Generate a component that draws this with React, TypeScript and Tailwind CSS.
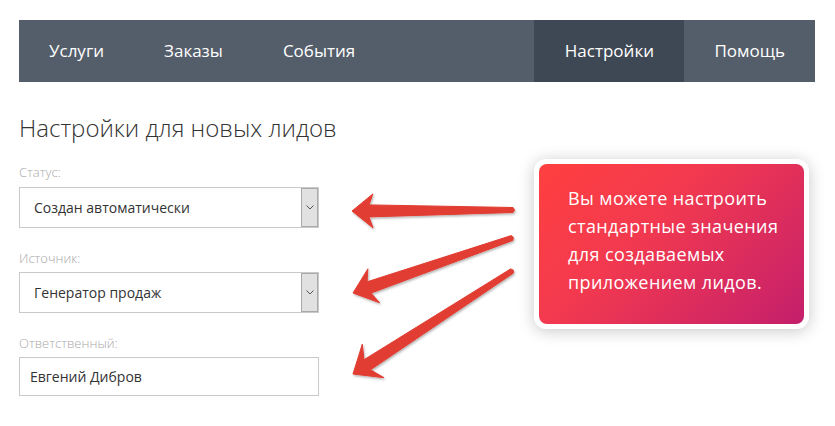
import React from "react";

type Pt = [number, number];

function arrowPoints(tip: Pt, tail: Pt, L = 23, W = 18, notch = 17, wh = 12, wt = 5): string {
  const dx = tail[0] - tip[0];
  const dy = tail[1] - tip[1];
  const len = Math.hypot(dx, dy);
  const ux = dx / len;
  const uy = dy / len;
  const nx = -uy;
  const ny = ux;
  const p = (a: number, b: number): string =>
    `${(tip[0] + ux * a + nx * b).toFixed(1)},${(tip[1] + uy * a + ny * b).toFixed(1)}`;
  return [
    p(0, 0),
    p(L, W),
    p(notch, wh / 2),
    p(len, wt / 2),
    p(len + 1.5, 0),
    p(len, -wt / 2),
    p(notch, -wh / 2),
    p(L, -W),
  ].join(" ");
}

function Select({ value }: { value: string }) {
  return (
    <div className="flex h-[41px] w-[300px] border border-[#c9c9c9] bg-white">
      <div className="flex flex-1 items-center pl-[14px] text-[14px] text-[#333]">{value}</div>
      <div className="flex w-[17px] items-center justify-center border border-[#a9a9a9] bg-[#e1e1e1]">
        <svg width="8" height="5" viewBox="0 0 8 5">
          <path d="M0.5 0.5 L4 4 L7.5 0.5" fill="none" stroke="#555" strokeWidth="1" />
        </svg>
      </div>
    </div>
  );
}

export default function App() {
  const navItem = "flex items-center px-[30px] text-[17px] text-white";
  return (
    <div className="relative h-[426px] w-[835px] overflow-hidden bg-white font-['Open_Sans',sans-serif]">
      <div className="px-[19px] pt-[20px] pr-[20px]">
        <div className="flex h-[62px] bg-[#545d6a]">
          <div className={navItem}>Услуги</div>
          <div className={navItem}>Заказы</div>
          <div className={navItem}>События</div>
          <div className={`${navItem} ml-auto w-[150px] justify-center bg-[#3e4754]`}>Настройки</div>
          <div className={navItem}>Помощь</div>
        </div>
      </div>

      <div className="flex px-[19px]">
        <div className="w-[300px]">
          <h1 className="mt-[31px] whitespace-nowrap text-[24px] font-light leading-[30px] text-[#333]">
            Настройки для новых лидов
          </h1>
          <div className="mt-[20px] text-[13px] font-light leading-[18px] text-[#a9a9a9]">Статус:</div>
          <div className="mt-[6px]">
            <Select value="Создан автоматически" />
          </div>
          <div className="mt-[21px] text-[13px] font-light leading-[18px] text-[#a9a9a9]">Источник:</div>
          <div className="mt-[5px]">
            <Select value="Генератор продаж" />
          </div>
          <div className="mt-[21px] text-[13px] font-light leading-[18px] text-[#a9a9a9]">Ответственный:</div>
          <div className="mt-[5px] flex h-[39px] w-[300px] items-center border border-[#c9c9c9] pl-[10px] text-[14px] text-[#333]">
            Евгений Дибров
          </div>
        </div>

        <div className="ml-auto mr-[7px] mt-[77px] h-[170px] w-[275px] rounded-[12px] bg-white p-[5px] shadow-[0_2px_16px_rgba(0,0,0,0.22)]">
          <div className="h-full w-full rounded-[8px] bg-[linear-gradient(135deg,#ff4040_0%,#f2394f_40%,#c41f6c_100%)] pl-[29px] pr-[10px] pt-[20px] text-[18px] leading-[28px] tracking-[0.4px] text-white">
            Вы можете настроить стандартные значения для создаваемых приложением лидов.
          </div>
        </div>
      </div>

      <svg className="pointer-events-none absolute left-0 top-0" width="835" height="426">
        <defs>
          <filter id="sh" x="-10%" y="-10%" width="120%" height="130%">
            <feDropShadow dx="1" dy="1.5" stdDeviation="0.8" floodColor="#000" floodOpacity="0.3" />
          </filter>
        </defs>
        <g fill="#e23c31" filter="url(#sh)" strokeLinejoin="round" stroke="#e23c31" strokeWidth="1">
          <polygon points={arrowPoints([352, 211], [513, 210], 21, 17)} />
          <polygon points={arrowPoints([353, 293], [512, 238], 22, 18)} />
          <polygon points={arrowPoints([353, 374], [512, 271], 24, 20)} />
        </g>
      </svg>
    </div>
  );
}
